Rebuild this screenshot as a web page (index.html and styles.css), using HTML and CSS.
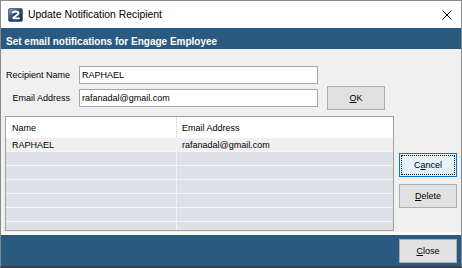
FILE: index.html
```html
<!DOCTYPE html>
<html lang="en">
<head>
    <meta charset="UTF-8">
    <title>Update Notification Recipient</title>
    <link rel="stylesheet" href="styles.css">
</head>
<body>
    <div class="window">
        <!-- Title bar -->
        <div class="titlebar">
            <svg class="app-icon" width="15" height="14" viewBox="0 0 15 14">
                <defs>
                    <linearGradient id="ig" x1="0" y1="0" x2="1" y2="1">
                        <stop offset="0" stop-color="#8aa2bd"/>
                        <stop offset="0.45" stop-color="#2f4d72"/>
                        <stop offset="1" stop-color="#172a42"/>
                    </linearGradient>
                </defs>
                <rect x="0.5" y="0.5" width="14" height="13" rx="1.5" fill="url(#ig)" stroke="#5d6f84"/>
                <path d="M4.5 4.6 Q7.5 2.6 10.3 4.2 Q11.2 6 8.4 7.4 L5.6 9.4 Q4.8 10.2 6 10.3 L11.2 10.3" fill="none" stroke="#ffffff" stroke-width="1.8" stroke-linecap="round"/>
            </svg>
            <span class="title">Update Notification Recipient</span>
            <svg class="close-x" width="10" height="10" viewBox="0 0 10 10">
                <path d="M0.5 0.5 L9.5 9.5 M9.5 0.5 L0.5 9.5" stroke="#000" stroke-width="1"/>
            </svg>
        </div>

        <!-- Banner -->
        <div class="banner">Set email notifications for Engage Employee</div>

        <!-- Main content -->
        <div class="content">
            <div class="form">
                <label class="label" for="name">Recipient Name</label>
                <input class="field" type="text" id="name" value="RAPHAEL">
                <span></span>

                <label class="label" for="email">Email Address</label>
                <input class="field" type="text" id="email" value="rafanadal@gmail.com">
                <button class="btn ok-button"><u>O</u>K</button>
            </div>

            <div class="lower">
                <div class="grid">
                    <div class="grid-row grid-head">
                        <div class="cell">Name</div>
                        <div class="cell">Email Address</div>
                    </div>
                    <div class="grid-row grid-item">
                        <div class="cell">RAPHAEL</div>
                        <div class="cell">rafanadal@gmail.com</div>
                    </div>
                    <div class="grid-row grid-empty"><div class="cell"></div><div class="cell"></div></div>
                    <div class="grid-row grid-empty"><div class="cell"></div><div class="cell"></div></div>
                    <div class="grid-row grid-empty"><div class="cell"></div><div class="cell"></div></div>
                    <div class="grid-row grid-empty"><div class="cell"></div><div class="cell"></div></div>
                    <div class="grid-row grid-empty"><div class="cell"></div><div class="cell"></div></div>
                    <div class="grid-row grid-empty"><div class="cell"></div><div class="cell"></div></div>
                </div>

                <div class="side-buttons">
                    <button class="btn focused">C<u>a</u>ncel</button>
                    <button class="btn"><u>D</u>elete</button>
                </div>
            </div>
        </div>

        <!-- Footer -->
        <div class="footer">
            <button class="btn"><u>C</u>lose</button>
        </div>
    </div>
</body>
</html>
```

FILE: styles.css
```css
body {
    margin: 0;
    padding: 0;
    background-color: #4a4f55;
    font-family: "Liberation Sans", Arial, sans-serif;
}

.window {
    width: 462px;
    height: 268px;
    box-sizing: border-box;
    border: 1px solid #8a8a8a;
    border-bottom: 2px solid #3c4046;
    display: flex;
    flex-direction: column;
    background: #f0f0f0;
}

.titlebar {
    height: 27px;
    flex: none;
    background: #ffffff;
    display: flex;
    align-items: center;
    padding-left: 7px;
}

.app-icon {
    margin-top: 0;
}

.title {
    margin-left: 5px;
    font-size: 10.4px;
    color: #000;
    flex: 1;
}

.close-x {
    margin-right: 9px;
    margin-top: 1px;
}

.banner {
    height: 21px;
    flex: none;
    box-sizing: border-box;
    background: #2a5a7f;
    color: #ffffff;
    font-weight: bold;
    font-size: 10px;
    line-height: 12px;
    padding: 8px 0 0 5px;
    border-bottom: 1px solid #e8edf2;
    height: 22px;
}

.content {
    height: 182px;
    flex: none;
    box-sizing: border-box;
    padding: 16px 0 1px 4px;
    border-bottom: 3px solid #fbfbfb;
    height: 185px;
}

.form {
    display: grid;
    grid-template-columns: 65px 239px 58px;
    grid-template-rows: 18px 24px;
    column-gap: 9px;
    row-gap: 2px;
    align-items: center;
}

.label {
    font-size: 9px;
    color: #000;
    text-align: right;
}

.field {
    height: 18px;
    box-sizing: border-box;
    margin: 0;
    border: 1px solid #a9a9a9;
    background: #ffffff;
    font-family: "Liberation Sans", Arial, sans-serif;
    font-size: 9px;
    color: #000;
    padding: 0 2px;
    outline: none;
}

.btn {
    width: 58px;
    height: 24px;
    box-sizing: border-box;
    margin: 0;
    padding: 0;
    background: #e1e1e1;
    border: 1px solid #adadad;
    font-family: "Liberation Sans", Arial, sans-serif;
    font-size: 9px;
    color: #000;
}

.btn u {
    text-underline-offset: 1px;
}

.focused {
    background: #e5f1fb;
    border-color: #0078d7;
    outline: 1px dotted #000;
    outline-offset: -3px;
}

.lower {
    display: flex;
    align-items: flex-start;
    gap: 5px;
    margin-top: 6px;
}

.grid {
    width: 389px;
    height: 115px;
    box-sizing: border-box;
    border: 1px solid #a0a0a0;
    background: #f0f0f0;
    overflow: hidden;
}

.grid-row {
    display: grid;
    grid-template-columns: 171px 212px;
    box-sizing: border-box;
}

.cell {
    font-size: 9px;
    color: #000;
    padding-left: 5px;
    display: flex;
    align-items: center;
    white-space: nowrap;
}

.grid-row .cell:first-child {
    padding-left: 6px;
}

.grid-head {
    height: 21px;
    background: #ffffff;
}

.grid-head .cell:first-child {
    border-right: 1px solid #e3e3e3;
}

.grid-item {
    height: 14px;
    background: #f0f0f0;
    border-bottom: 1px solid #f6f7f8;
}

.grid-item .cell:first-child,
.grid-empty .cell:first-child {
    border-right: 1px solid #f4f5f7;
}

.grid-empty {
    height: 14px;
    background: #dde1e5;
    border-bottom: 1px solid #f4f5f7;
}

.side-buttons {
    display: flex;
    flex-direction: column;
    gap: 7px;
    padding-top: 37px;
}

.footer {
    flex: 1;
    background: #2a5a7f;
    display: flex;
    justify-content: flex-end;
    align-items: flex-start;
    padding: 4px 4px 0 0;
}
```
